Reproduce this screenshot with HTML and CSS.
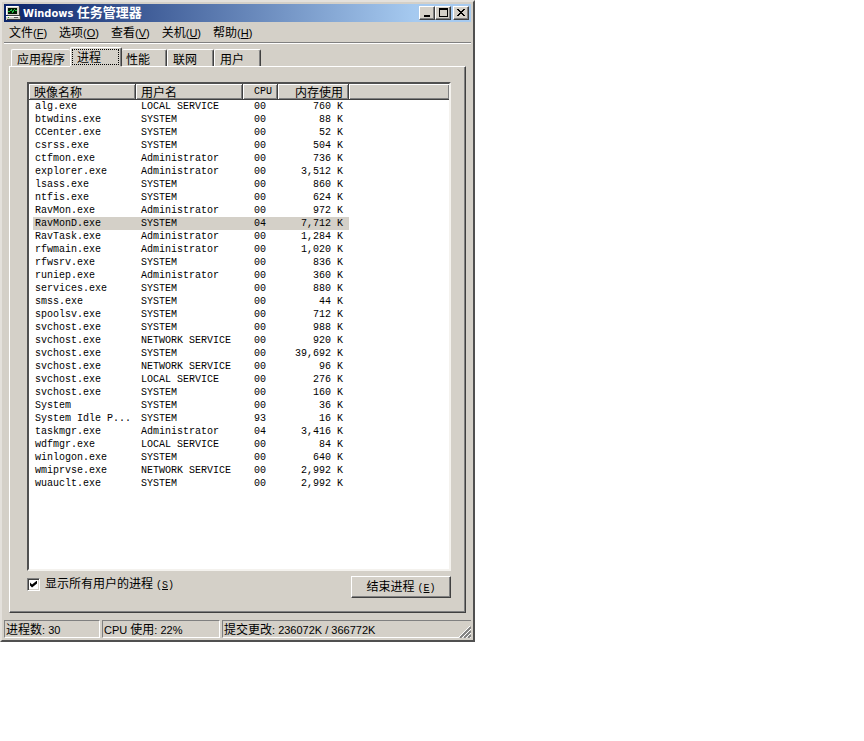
FILE: index.html
```html
<!DOCTYPE html>
<html lang="zh-CN">
<head>
<meta charset="utf-8">
<title>Windows 任务管理器</title>
<link rel="stylesheet" href="styles.css">
</head>
<body>
<main class="window">
  <header class="titlebar">
    <svg class="app-icon" viewBox="0 0 16 16" aria-hidden="true" shape-rendering="crispEdges">
      <path fill="#d4d0c8" d="M1 1h13v9H1zM3 10h10v1H3zM1 11h14v4H1z"/>
      <path fill="#fff" d="M1 1h12v1H1zM1 2h1v8H1zM1 11h13v1H1z"/>
      <path fill="#404040" d="M14 2h1v9H3v-1h11zM2 15h14v-4h-1v3H2z"/>
      <path fill="#001800" d="M3 3h9v6H3z"/>
      <path fill="#20c040" d="M3 6h2v1H3zM5 5h1v1H5zM6 4h1v2H6zM7 6h1v2H7zM8 5h1v2H8zM9 4h1v1H9zM10 5h2v1h-2z"/>
      <path fill="#606060" d="M9 12h4v1H9z"/>
      <path fill="#20a020" d="M3 12h1v1H3z"/>
    </svg>
    <h1 class="title">Windows <span class="cjk">任务管理器</span></h1>
    <div class="caption-buttons">
      <button class="caption" aria-label="最小化"><svg viewBox="0 0 12 10" shape-rendering="crispEdges"><path d="M3 7h6v2H3z"/></svg></button>
      <button class="caption" aria-label="最大化"><svg viewBox="0 0 12 10" shape-rendering="crispEdges"><path fill-rule="evenodd" d="M2 0h9v9H2zM3 2v6h7V2z"/></svg></button>
      <button class="caption close" aria-label="关闭"><svg viewBox="0 0 12 10" shape-rendering="crispEdges"><path d="M2 1h2v1h1v1h2V2h1V1h2v1H9v1H8v1H7v1h1v1h1v1h1v1H8V7H7V6H5v1H4v1H2V7h1V6h1V5h1V4H4V3H3V2H2z"/></svg></button>
    </div>
  </header>
  <nav class="menu">
    <button><span class="cjk">文件</span>(<u>F</u>)</button>
    <button><span class="cjk">选项</span>(<u>O</u>)</button>
    <button><span class="cjk">查看</span>(<u>V</u>)</button>
    <button><span class="cjk">关机</span>(<u>U</u>)</button>
    <button><span class="cjk">帮助</span>(<u>H</u>)</button>
  </nav>
  <div class="tabs" role="tablist">
    <button class="tab first" role="tab">应用程序</button>
    <button class="tab selected" role="tab" aria-selected="true"><span class="focus">进程</span></button>
    <button class="tab after-selected" role="tab">性能</button>
    <button class="tab" role="tab">联网</button>
    <button class="tab" role="tab">用户</button>
  </div>
  <section class="panel">
    <div class="list">
      <table>
        <colgroup><col class="c-name"><col class="c-user"><col class="c-cpu"><col class="c-mem"><col></colgroup>
        <thead><tr><th>映像名称</th><th>用户名</th><th class="num latin">CPU</th><th class="num">内存使用</th><th></th></tr></thead>
        <tbody>
          <tr><td>alg.exe</td><td>LOCAL SERVICE</td><td>00</td><td>760 K</td></tr>
          <tr><td>btwdins.exe</td><td>SYSTEM</td><td>00</td><td>88 K</td></tr>
          <tr><td>CCenter.exe</td><td>SYSTEM</td><td>00</td><td>52 K</td></tr>
          <tr><td>csrss.exe</td><td>SYSTEM</td><td>00</td><td>504 K</td></tr>
          <tr><td>ctfmon.exe</td><td>Administrator</td><td>00</td><td>736 K</td></tr>
          <tr><td>explorer.exe</td><td>Administrator</td><td>00</td><td>3,512 K</td></tr>
          <tr><td>lsass.exe</td><td>SYSTEM</td><td>00</td><td>860 K</td></tr>
          <tr><td>ntfis.exe</td><td>SYSTEM</td><td>00</td><td>624 K</td></tr>
          <tr><td>RavMon.exe</td><td>Administrator</td><td>00</td><td>972 K</td></tr>
          <tr class="current"><td>RavMonD.exe</td><td>SYSTEM</td><td>04</td><td>7,712 K</td></tr>
          <tr><td>RavTask.exe</td><td>Administrator</td><td>00</td><td>1,284 K</td></tr>
          <tr><td>rfwmain.exe</td><td>Administrator</td><td>00</td><td>1,020 K</td></tr>
          <tr><td>rfwsrv.exe</td><td>SYSTEM</td><td>00</td><td>836 K</td></tr>
          <tr><td>runiep.exe</td><td>Administrator</td><td>00</td><td>360 K</td></tr>
          <tr><td>services.exe</td><td>SYSTEM</td><td>00</td><td>880 K</td></tr>
          <tr><td>smss.exe</td><td>SYSTEM</td><td>00</td><td>44 K</td></tr>
          <tr><td>spoolsv.exe</td><td>SYSTEM</td><td>00</td><td>712 K</td></tr>
          <tr><td>svchost.exe</td><td>SYSTEM</td><td>00</td><td>988 K</td></tr>
          <tr><td>svchost.exe</td><td>NETWORK SERVICE</td><td>00</td><td>920 K</td></tr>
          <tr><td>svchost.exe</td><td>SYSTEM</td><td>00</td><td>39,692 K</td></tr>
          <tr><td>svchost.exe</td><td>NETWORK SERVICE</td><td>00</td><td>96 K</td></tr>
          <tr><td>svchost.exe</td><td>LOCAL SERVICE</td><td>00</td><td>276 K</td></tr>
          <tr><td>svchost.exe</td><td>SYSTEM</td><td>00</td><td>160 K</td></tr>
          <tr><td>System</td><td>SYSTEM</td><td>00</td><td>36 K</td></tr>
          <tr><td>System Idle P...</td><td>SYSTEM</td><td>93</td><td>16 K</td></tr>
          <tr><td>taskmgr.exe</td><td>Administrator</td><td>04</td><td>3,416 K</td></tr>
          <tr><td>wdfmgr.exe</td><td>LOCAL SERVICE</td><td>00</td><td>84 K</td></tr>
          <tr><td>winlogon.exe</td><td>SYSTEM</td><td>00</td><td>640 K</td></tr>
          <tr><td>wmiprvse.exe</td><td>NETWORK SERVICE</td><td>00</td><td>2,992 K</td></tr>
          <tr><td>wuauclt.exe</td><td>SYSTEM</td><td>00</td><td>2,992 K</td></tr>
        </tbody>
      </table>
    </div>
    <div class="actions">
      <label class="check"><input type="checkbox" checked><span>显示所有用户的进程<span class="key">(<u>S</u>)</span></span></label>
      <button class="push">结束进程<span class="key">(<u>E</u>)</span></button>
    </div>
  </section>
  <footer class="status">
    <div class="pane pane-count"><span class="cjk">进程数</span>: 30</div>
    <div class="pane pane-cpu">CPU <span class="cjk">使用</span>: 22%</div>
    <div class="pane pane-commit"><span class="cjk">提交更改</span>: 236072K / 366772K</div>
    <svg class="grip" viewBox="0 0 12 12" aria-hidden="true"><path stroke="#808080" stroke-width="2" d="M1 12L12 1M5 12L12 5M9 12L12 9"/><path stroke="#fff" d="M0 11L11 0M4 11L12 3M8 11L12 7"/></svg>
  </footer>
</main>
</body>
</html>
```
FILE: styles.css
```css
:root {
  --face: #d4d0c8;
  --shade: #808080;
  --dark: #404040;
  --ui: "Liberation Sans", "Noto Sans CJK SC", sans-serif;
  --han: "Noto Sans CJK SC", sans-serif;
  --song: "Liberation Mono", "Noto Sans CJK SC", monospace;
}

* { box-sizing: border-box; }

body {
  margin: 0;
  background: #fff;
  color: #000;
  font: 11px/16px var(--ui);
}

button {
  margin: 0;
  padding: 0;
  border: 0;
  background: none;
  color: inherit;
  font: inherit;
  white-space: nowrap;
}

.cjk {
  font-family: var(--han);
  font-size: 12px;
}

.window {
  max-width: 475px;
  padding: 2px;
  border: 2px solid;
  border-color: #e4e1dc #505050 #505050 #e4e1dc;
  background: var(--face);
}

/* Title bar */
.titlebar {
  display: flex;
  align-items: center;
  height: 18px;
  padding: 0 2px 0 1px;
  background: linear-gradient(90deg, #0a246a, #a6caf0 88%);
  color: #fff;
}

.app-icon { width: 16px; height: 16px; }

.title {
  flex: 1;
  margin: 0 0 0 2px;
  font: bold 11px/18px "DejaVu Sans Condensed", "DejaVu Sans", sans-serif;
  white-space: nowrap;
}

.title .cjk { font-size: 13px; }

.caption-buttons { display: flex; }

.caption,
.push {
  border: 1px solid;
  border-color: #fff var(--dark) var(--dark) #fff;
  background: var(--face);
  box-shadow: inset -1px -1px var(--shade);
}

.caption {
  display: flex;
  width: 16px;
  height: 14px;
  padding: 1px;
}

.caption svg { width: 12px; height: 10px; }
.close { margin-left: 2px; }

/* Menu */
.menu {
  display: flex;
  gap: 12px;
  height: 22px;
  padding: 2px 5px 0;
  border-bottom: 1px solid #fff;
  box-shadow: inset 0 -1px var(--shade);
}

.menu button { height: 16px; }

/* Tabs */
.tabs {
  display: flex;
  align-items: flex-end;
  height: 22px;
  padding-left: 7px;
  font: 12px/17px var(--han);
}

.tab {
  height: 17px;
  padding: 0 16px 0 5px;
  border-top: 1px solid #fff;
  border-left: 1px solid #fff;
  border-right: 1px solid var(--dark);
  border-radius: 2px 2px 0 0;
  box-shadow: inset -1px 0 var(--shade);
}

.first { padding: 0 5px; border-right: 0; box-shadow: none; }
.after-selected { border-left: 0; padding-left: 4px; }

.selected {
  position: relative;
  height: 19px;
  padding: 1px 2px 1px 1px;
  background: var(--face);
  box-shadow: inset -1px 0 var(--shade), 0 1px var(--face);
}

.focus {
  display: block;
  height: 16px;
  padding: 0 17px 0 4px;
  border: 1px dotted #000;
  line-height: 14px;
}

/* Process page */
.panel {
  margin: 0 5px;
  padding: 15px 14px 14px 17px;
  border: 2px solid;
  border-color: #fff var(--dark) var(--dark) #fff;
  border-width: 1px;
  box-shadow: inset -1px -1px var(--shade);
}

.list {
  padding-bottom: 79px;
  border: 2px solid;
  border-color: #505050 #f4f2ee #f4f2ee #505050;
  background: #fff;
}

table {
  width: 100%;
  table-layout: fixed;
  border-collapse: separate;
  border-spacing: 0;
  font: 10px/13px var(--song);
  white-space: nowrap;
}

.c-name, .c-user { width: 107px; }
.c-cpu { width: 35px; }
.c-mem { width: 71px; }

th {
  height: 16px;
  padding: 0 4px 0 5px;
  border-right: 1px solid var(--dark);
  border-bottom: 1px solid var(--dark);
  background: var(--face);
  box-shadow: inset 1px 1px #fff, inset -1px -1px var(--shade);
  font: 12px/15px var(--han);
  text-align: left;
}

th.latin { font: 10px/15px var(--song); }
th.num { text-align: right; padding-right: 5px; }
th:last-child { border-right: 0; }

td {
  height: 13px;
  padding: 0 5px;
}

td:first-child {
  padding: 0 0 0 2px;
  border-left: 4px solid transparent;
  background-clip: padding-box;
}

td:nth-child(3) { padding-right: 12px; text-align: right; }
td:nth-child(4) { padding-right: 6px; text-align: right; }
.current td { background-color: var(--face); }

.actions {
  display: flex;
  justify-content: space-between;
  margin-top: 5px;
  font: 12px/16px var(--han);
}

.key { margin-left: 3px; font: 10px/16px var(--song); }

.check {
  display: flex;
  align-items: center;
  gap: 5px;
  height: 16px;
}

.check input {
  appearance: none;
  width: 13px;
  height: 13px;
  margin: 0;
  border: 1px solid;
  border-color: var(--shade) #fff #fff var(--shade);
  background: #fff;
  box-shadow: inset 1px 1px var(--dark), inset -1px -1px var(--face);
}

.check input:checked::before {
  content: "";
  display: block;
  width: 7px;
  height: 7px;
  margin: 2px;
  background: #000;
  clip-path: polygon(0 29%, 29% 57%, 100% 0, 100% 43%, 29% 100%, 0 71%);
}

.push {
  width: 100px;
  height: 22px;
}

/* Status bar */
.status {
  position: relative;
  display: flex;
  gap: 2px;
  margin-top: 7px;
}

.pane {
  height: 18px;
  padding-left: 1px;
  border: 1px solid;
  border-color: var(--shade) #fff #fff var(--shade);
  white-space: nowrap;
}

.pane-count { width: 96px; }
.pane-cpu { width: 118px; }
.pane-commit { flex: 1; border-right: 0; }

.grip {
  position: absolute;
  right: 0;
  bottom: 0;
  width: 12px;
  height: 12px;
}
```
